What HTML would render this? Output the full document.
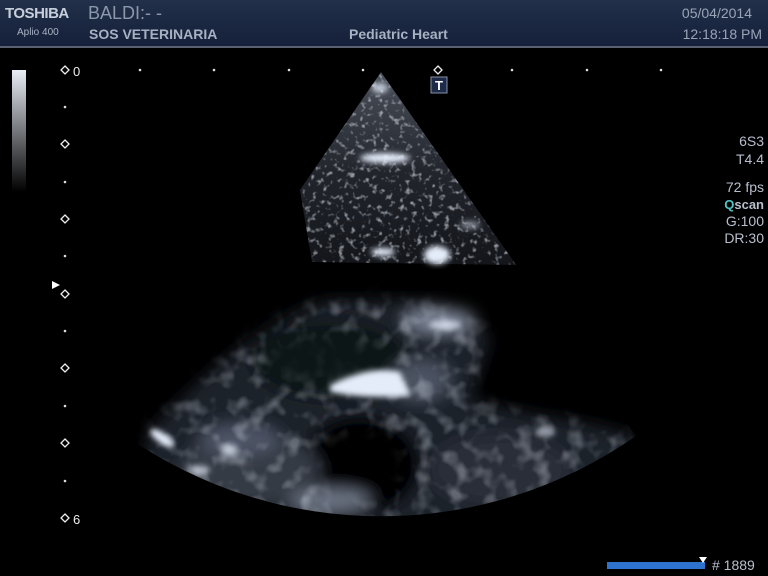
<!DOCTYPE html>
<html><head><style>
html,body{margin:0;padding:0;background:#000;width:768px;height:576px;overflow:hidden;font-family:"Liberation Sans",sans-serif}
.hdr{position:absolute;left:0;top:0;width:768px;height:46px;background:linear-gradient(#22304a,#15203a);border-bottom:2px solid #5a6070}
.t{position:absolute;white-space:nowrap}
</style></head><body>
<div class="hdr"></div>
<div class="t" style="left:5px;top:5px;font-size:15px;font-weight:bold;color:#c8cfdb;letter-spacing:-0.5px">TOSHIBA</div>
<div class="t" style="left:17px;top:27px;font-size:10px;color:#aab3c4">Aplio 400</div>
<div class="t" style="left:88px;top:3px;font-size:18px;color:#8d97aa">BALDI:- -</div>
<div class="t" style="left:89px;top:26px;font-size:14px;font-weight:bold;color:#a8b1c2">SOS VETERINARIA</div>
<div class="t" style="left:349px;top:26px;font-size:14px;font-weight:bold;color:#a8b1c2">Pediatric Heart</div>
<div class="t" style="right:16px;top:5px;font-size:14px;color:#9aa4b6">05/04/2014</div>
<div class="t" style="right:6px;top:26px;font-size:14px;color:#9aa4b6">12:18:18 PM</div>

<div class="t" style="right:4px;top:132px;font-size:14px;line-height:18px;color:#b8bfcc;text-align:right">6S3<br>T4.4<br><span style="display:inline-block;margin-top:10px">72 fps</span></div>
<div class="t" style="right:4px;top:197px;font-size:13px;font-weight:bold;color:#b8bfcc"><span style="color:#4fc7c7">Q</span>scan</div>
<div class="t" style="right:4px;top:213px;font-size:14px;line-height:17px;color:#b8bfcc;text-align:right">G:100<br>DR:30</div>

<div style="position:absolute;left:12px;top:70px;width:14px;height:122px;background:linear-gradient(#e8edf6,#000)"></div>

<svg width="768" height="576" style="position:absolute;left:0;top:0">
<defs>
<clipPath id="sec"><path d="M381,72 L126,436 A445,445 0 0 0 636,436 Z"/></clipPath>
<clipPath id="wedge"><path d="M381,72 L300,190 L312,262 L517,265 Z"/></clipPath>
<filter id="bl" x="-20%" y="-20%" width="140%" height="140%"><feGaussianBlur stdDeviation="8"/></filter>
<filter id="bl2"><feGaussianBlur stdDeviation="3"/></filter>
<filter id="sp"><feTurbulence type="fractalNoise" baseFrequency="0.18" numOctaves="2" seed="3"/><feColorMatrix values="0 0 0 0 0.85 0 0 0 0 0.9 0 0 0 0 1 0 0 0 4 -2.2"/></filter>
<filter id="sp2"><feTurbulence type="fractalNoise" baseFrequency="0.06" numOctaves="2" seed="7"/><feColorMatrix values="0 0 0 0 0.85 0 0 0 0 0.9 0 0 0 0 1 0 0 0 3 -1.4"/></filter>
<linearGradient id="wg" x1="0" y1="0" x2="0" y2="1"><stop offset="0" stop-color="#4a505a"/><stop offset="0.5" stop-color="#22252c"/><stop offset="1" stop-color="#121419"/></linearGradient>
<mask id="fm"><g filter="url(#bl)">
<path d="M150,430 C200,380 260,320 330,300 L400,300 C440,300 480,320 490,340 L470,400 C540,420 600,420 640,440 L640,560 L120,560 Z" fill="#fff"/>
<ellipse cx="330" cy="360" rx="70" ry="32" fill="#333"/>
<ellipse cx="360" cy="465" rx="55" ry="45" fill="#000"/>
</g></mask>
</defs>
<g clip-path="url(#sec)">
<g clip-path="url(#wedge)">
<rect x="290" y="72" width="240" height="200" fill="url(#wg)"/>
<rect x="290" y="72" width="240" height="200" filter="url(#sp)" opacity="0.55"/>
</g>
<g filter="url(#bl2)" fill="#e4ecfa">
<ellipse cx="385" cy="158" rx="25" ry="5"/>
<ellipse cx="380" cy="88" rx="8" ry="5" opacity=".8"/>
<ellipse cx="437" cy="255" rx="13" ry="9"/>
<ellipse cx="383" cy="252" rx="12" ry="4"/>
<ellipse cx="470" cy="225" rx="10" ry="4" opacity=".5"/>
</g>
<g filter="url(#bl)">
<path d="M150,430 C200,380 260,320 330,300 L400,300 C440,300 480,320 490,340 L470,400 C540,420 600,420 640,440 L640,560 L120,560 Z" fill="#1f232b"/>
<ellipse cx="330" cy="360" rx="80" ry="40" fill="#101216"/>
<ellipse cx="360" cy="465" rx="60" ry="50" fill="#000"/>
<ellipse cx="250" cy="470" rx="70" ry="35" fill="#353a45"/>
<ellipse cx="500" cy="470" rx="70" ry="35" fill="#2a2e37"/>
<ellipse cx="440" cy="320" rx="35" ry="12" fill="#7b8496"/>
<ellipse cx="420" cy="380" rx="30" ry="20" fill="#4c5262"/>
<ellipse cx="240" cy="440" rx="40" ry="15" fill="#4d5466"/>
<ellipse cx="330" cy="500" rx="40" ry="10" fill="#6f7888"/>
</g>
<rect x="120" y="290" width="530" height="240" filter="url(#sp2)" opacity="0.3" mask="url(#fm)"/>
<g filter="url(#bl2)" fill="#e4ecfa">
<ellipse cx="162" cy="438" rx="14" ry="5" transform="rotate(35 162 438)"/>
<ellipse cx="230" cy="450" rx="8" ry="6" opacity=".7"/>
<ellipse cx="200" cy="470" rx="10" ry="5" opacity=".6"/>
<ellipse cx="545" cy="432" rx="10" ry="5" opacity=".6"/>
<path d="M330,385 Q370,365 400,372 L410,395 Q370,400 330,392 Z"/>
<ellipse cx="445" cy="325" rx="16" ry="5" opacity=".7"/>
</g>
</g>
<g fill="none" stroke="#eee" stroke-width="1.3">
<path d="M65,66 l4,4 -4,4 -4,-4z"/><path d="M65,140 l4,4 -4,4 -4,-4z"/><path d="M65,215 l4,4 -4,4 -4,-4z"/><path d="M65,290 l4,4 -4,4 -4,-4z"/><path d="M65,364 l4,4 -4,4 -4,-4z"/><path d="M65,439 l4,4 -4,4 -4,-4z"/><path d="M65,514 l4,4 -4,4 -4,-4z"/>
<path d="M438,66 l4,4 -4,4 -4,-4z"/>
</g>
<g fill="#ddd">
<circle cx="65" cy="107" r="1.3"/><circle cx="65" cy="182" r="1.3"/><circle cx="65" cy="256" r="1.3"/><circle cx="65" cy="331" r="1.3"/><circle cx="65" cy="406" r="1.3"/><circle cx="65" cy="481" r="1.3"/>
<circle cx="140" cy="70" r="1.3"/><circle cx="214" cy="70" r="1.3"/><circle cx="289" cy="70" r="1.3"/><circle cx="363" cy="70" r="1.3"/><circle cx="512" cy="70" r="1.3"/><circle cx="587" cy="70" r="1.3"/><circle cx="661" cy="70" r="1.3"/>
</g>
<path d="M52,281 l8,4 -8,4z" fill="#fff"/>
<text x="73" y="76" fill="#eee" font-size="13" font-family="Liberation Sans">0</text>
<text x="73" y="524" fill="#eee" font-size="13" font-family="Liberation Sans">6</text>
<rect x="431" y="77" width="16" height="16" fill="#1e2a4a" stroke="#8890a0"/>
<text x="439" y="90" fill="#fff" font-size="13" font-weight="bold" text-anchor="middle" font-family="Liberation Sans">T</text>
<rect x="607" y="562" width="98" height="7" fill="#2e72d0"/>
<path d="M699,557 h8 l-4,6z" fill="#fff"/>
<text x="712" y="570" fill="#b8bfcc" font-size="14" font-family="Liberation Sans"># 1889</text>
</svg>
</body></html>
